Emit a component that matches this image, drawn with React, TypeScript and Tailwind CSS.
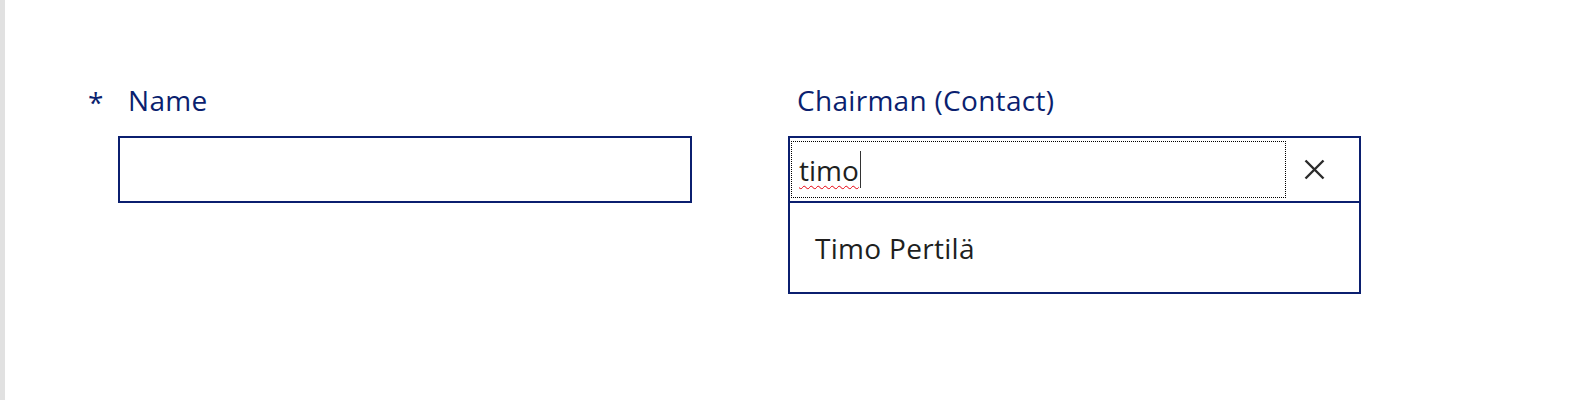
import React from 'react'

const font = { fontFamily: '"Open Sans", "Noto Sans", sans-serif' }

export default function App() {
  return (
    <div className="flex h-[400px] w-full bg-white" style={font}>
      <div className="w-[5px] shrink-0 bg-[#e1e1e1]" />
      <div className="flex flex-1 items-start pt-[82px]">
        {/* Name */}
        <div className="ml-[83px] flex flex-col">
          <div className="flex h-[36px] items-center text-[28px] leading-none tracking-[0.3px] text-[#0b1f6f]">
            <span className="w-[40px] pt-[4px]">*</span>
            <span>Name</span>
          </div>
          <div className="ml-[30px] mt-[18px] h-[67px] w-[574px] border-2 border-[#0b1f6f] bg-white" />
        </div>

        {/* Chairman (Contact) */}
        <div className="ml-[96px] flex flex-col">
          <div className="flex h-[36px] items-center pl-[9px] text-[28px] leading-none tracking-[0.3px] text-[#0b1f6f]">
            Chairman (Contact)
          </div>
          <div className="mt-[18px] w-[573px] border-2 border-[#0b1f6f] bg-white">
            <div className="flex h-[65px] items-center border-b-2 border-[#0b1f6f] pl-[1px]">
              <div className="flex h-[57px] flex-1 items-center border border-dotted border-black pl-[7px]">
                <span className="text-[28px] leading-none text-[#201f1e] underline decoration-wavy decoration-red-600 decoration-1 underline-offset-[4px]">
                  timo
                </span>
                <span className="ml-[1px] h-[37px] w-px bg-[#333]" />
              </div>
              <div className="flex w-[73px] items-center pl-[18px]">
                <svg width="21" height="21" viewBox="0 0 21 21" fill="none" stroke="#2b2b2b" strokeWidth="2.4">
                  <path d="M1.5 1.5 L19.5 19.5 M19.5 1.5 L1.5 19.5" />
                </svg>
              </div>
            </div>
            <div className="flex h-[89px] items-center pl-[25px] text-[28px] leading-none tracking-[0.3px] text-[#201f1e]">
              Timo Pertilä
            </div>
          </div>
        </div>
      </div>
    </div>
  )
}
